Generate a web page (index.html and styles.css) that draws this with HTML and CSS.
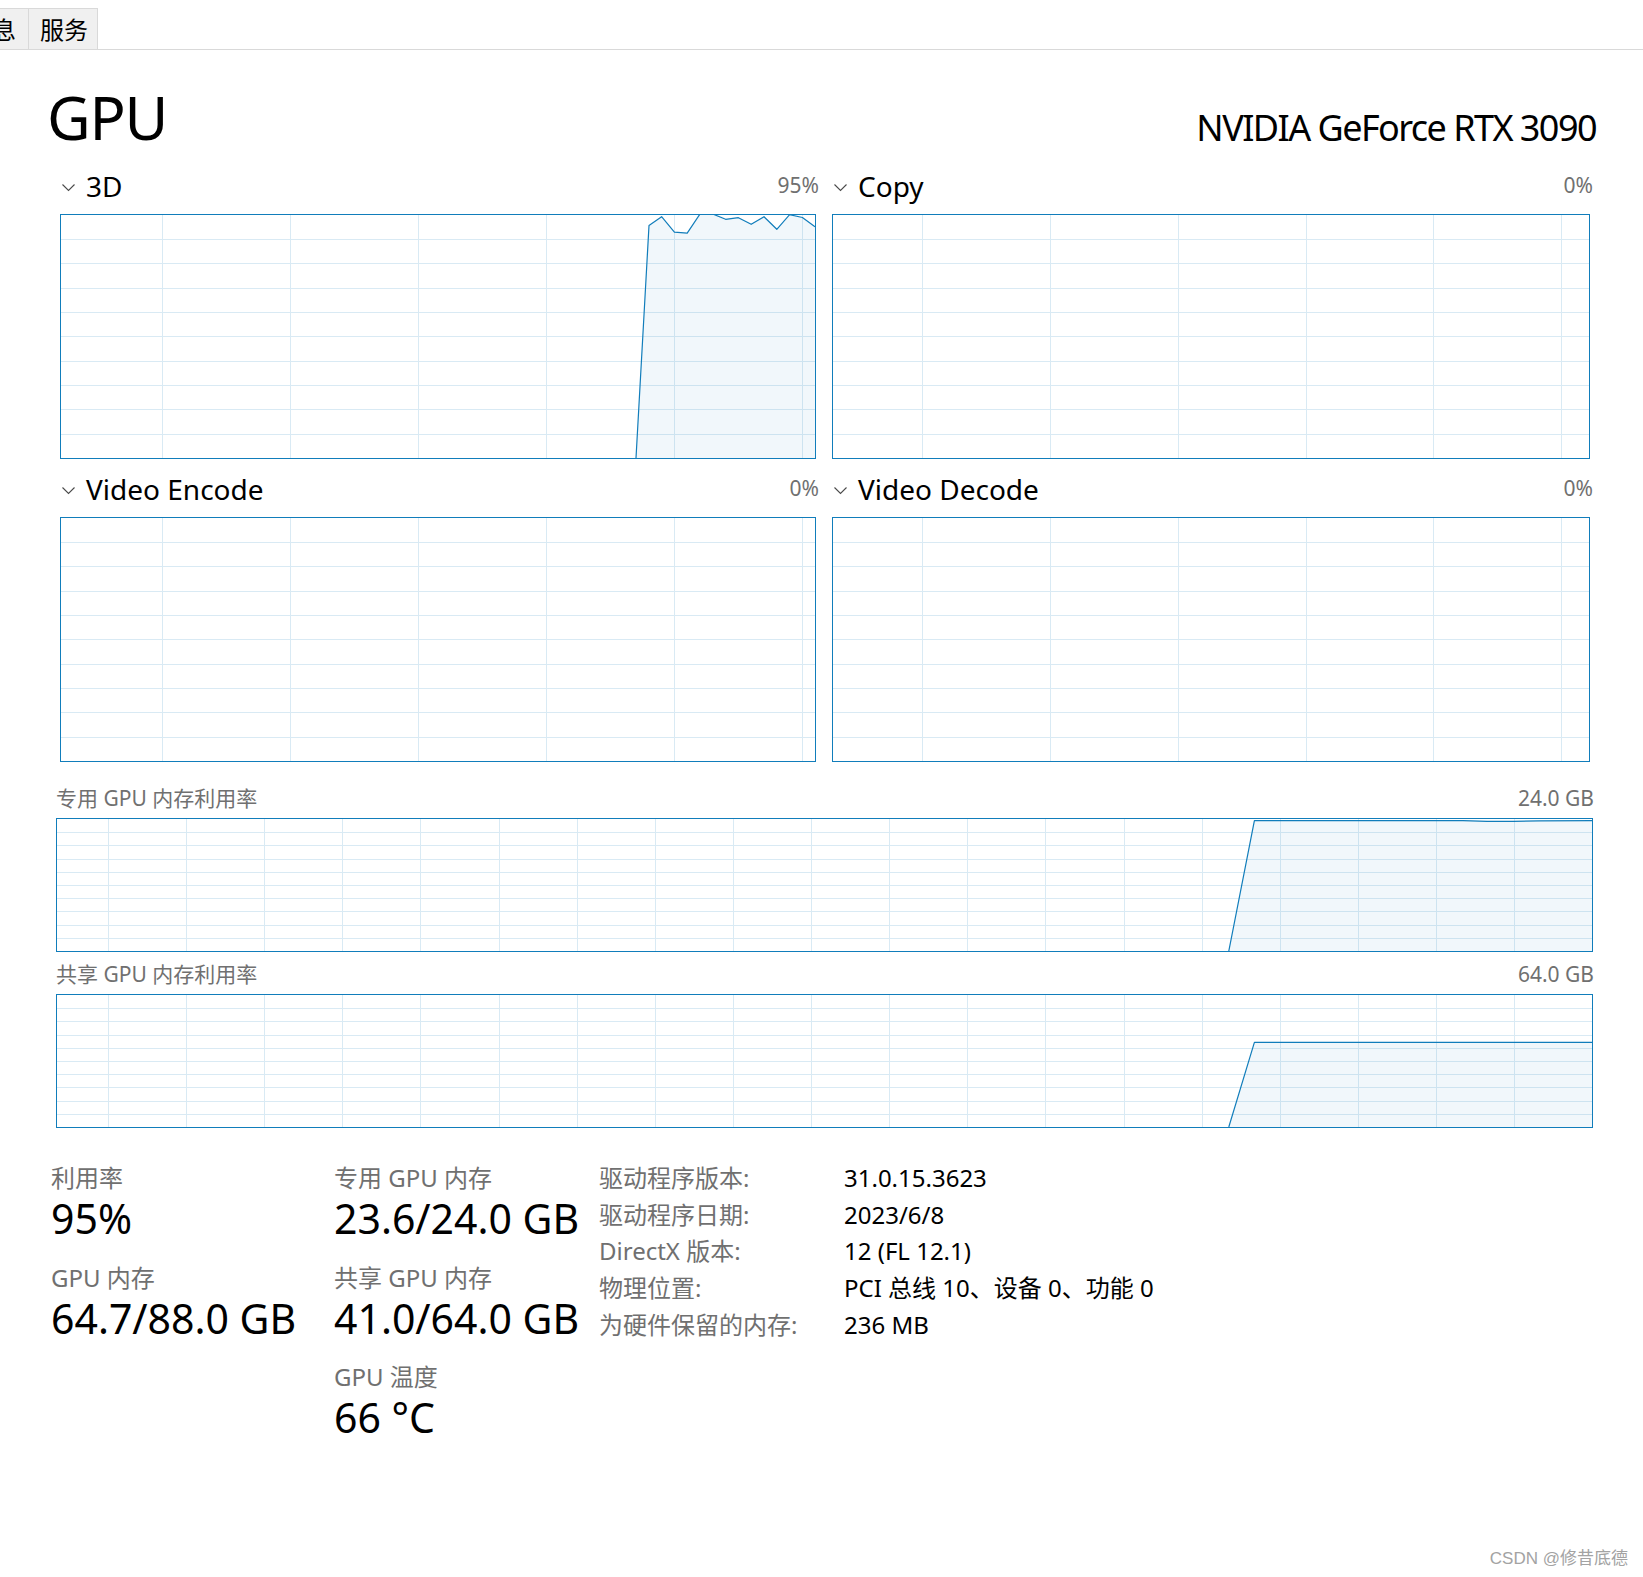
FILE: index.html
```html
<!DOCTYPE html>
<html lang="zh-CN">
<head>
<meta charset="utf-8">
<title>GPU</title>
<link rel="stylesheet" href="styles.css">
</head>
<body>
<nav class="tabs">
  <div class="tab tab-partial"><span>详细信息</span></div>
  <div class="tab">服务</div>
</nav>
<main class="page">
  <header class="head">
    <h1 class="title">GPU</h1>
    <div class="model">NVIDIA GeForce RTX 3090</div>
  </header>

  <section class="engines">
    <div class="engine">
      <div class="engine-head">
        <svg class="chev" width="14" height="8" viewBox="0 0 14 8"><path d="M0.5 0.5L6.5 6.5L12.5 0.5"/></svg>
        <span class="engine-name">3D</span>
        <span class="engine-pct">95%</span>
      </div>
      <div class="graph graph-engine">
        <svg class="plot" width="754" height="243" viewBox="0 0 754 243">
          <path class="grid" d="M0 24.5H754M0 48.5H754M0 73.5H754M0 97.5H754M0 121.5H754M0 146.5H754M0 170.5H754M0 194.5H754M0 219.5H754M101.5 0V243M229.5 0V243M357.5 0V243M485.5 0V243M613.5 0V243M741.5 0V243"/>
          <polygon class="area" points="0,243 575,243 588,10.5 600.6,1.7 613.4,17.2 626.2,18.2 639,-1 651.8,-1 664.6,4.3 677.4,2.7 690.2,9.3 703,1.7 715.8,14.3 728.6,-0.3 741.4,2.5 754,11.7 754,243"/>
          <polyline class="line" points="575,243 588,10.5 600.6,1.7 613.4,17.2 626.2,18.2 639,-1 651.8,-1 664.6,4.3 677.4,2.7 690.2,9.3 703,1.7 715.8,14.3 728.6,-0.3 741.4,2.5 754,11.7"/>
        </svg>
      </div>
    </div>
    <div class="engine">
      <div class="engine-head">
        <svg class="chev" width="14" height="8" viewBox="0 0 14 8"><path d="M0.5 0.5L6.5 6.5L12.5 0.5"/></svg>
        <span class="engine-name">Copy</span>
        <span class="engine-pct">0%</span>
      </div>
      <div class="graph graph-engine">
        <svg class="plot" width="756" height="243" viewBox="0 0 756 243">
          <path class="grid" d="M0 24.5H756M0 48.5H756M0 73.5H756M0 97.5H756M0 121.5H756M0 146.5H756M0 170.5H756M0 194.5H756M0 219.5H756M89.5 0V243M217.5 0V243M345.5 0V243M473.5 0V243M600.5 0V243M728.5 0V243"/>
        </svg>
      </div>
    </div>
    <div class="engine">
      <div class="engine-head">
        <svg class="chev" width="14" height="8" viewBox="0 0 14 8"><path d="M0.5 0.5L6.5 6.5L12.5 0.5"/></svg>
        <span class="engine-name">Video Encode</span>
        <span class="engine-pct">0%</span>
      </div>
      <div class="graph graph-engine">
        <svg class="plot" width="754" height="243" viewBox="0 0 754 243">
          <path class="grid" d="M0 24.5H754M0 48.5H754M0 73.5H754M0 97.5H754M0 121.5H754M0 146.5H754M0 170.5H754M0 194.5H754M0 219.5H754M101.5 0V243M229.5 0V243M357.5 0V243M485.5 0V243M613.5 0V243M741.5 0V243"/>
        </svg>
      </div>
    </div>
    <div class="engine">
      <div class="engine-head">
        <svg class="chev" width="14" height="8" viewBox="0 0 14 8"><path d="M0.5 0.5L6.5 6.5L12.5 0.5"/></svg>
        <span class="engine-name">Video Decode</span>
        <span class="engine-pct">0%</span>
      </div>
      <div class="graph graph-engine">
        <svg class="plot" width="756" height="243" viewBox="0 0 756 243">
          <path class="grid" d="M0 24.5H756M0 48.5H756M0 73.5H756M0 97.5H756M0 121.5H756M0 146.5H756M0 170.5H756M0 194.5H756M0 219.5H756M89.5 0V243M217.5 0V243M345.5 0V243M473.5 0V243M600.5 0V243M728.5 0V243"/>
        </svg>
      </div>
    </div>
  </section>

  <section class="mem">
    <div class="mem-head"><span>专用 GPU 内存利用率</span><span>24.0 GB</span></div>
    <div class="graph graph-mem">
      <svg class="plot" width="1535" height="132" viewBox="0 0 1535 132">
        <path class="grid" d="M0 13.5H1535M0 26.5H1535M0 40.5H1535M0 53.5H1535M0 66.5H1535M0 79.5H1535M0 92.5H1535M0 106.5H1535M0 119.5H1535M51.5 0V132M129.5 0V132M207.5 0V132M285.5 0V132M363.5 0V132M442.5 0V132M520.5 0V132M598.5 0V132M676.5 0V132M754.5 0V132M832.5 0V132M910.5 0V132M988.5 0V132M1067.5 0V132M1145.5 0V132M1223.5 0V132M1301.5 0V132M1379.5 0V132M1457.5 0V132"/>
        <polygon class="area" points="0,132 1171.8,132 1197.4,1.7 1406,1.7 1430,2.4 1456,2.3 1482,1.8 1535,1.7 1535,132"/>
        <polyline class="line" points="1171.8,132 1197.4,1.7 1406,1.7 1430,2.4 1456,2.3 1482,1.8 1535,1.7"/>
      </svg>
    </div>
    <div class="mem-head"><span>共享 GPU 内存利用率</span><span>64.0 GB</span></div>
    <div class="graph graph-mem">
      <svg class="plot" width="1535" height="132" viewBox="0 0 1535 132">
        <path class="grid" d="M0 13.5H1535M0 26.5H1535M0 40.5H1535M0 53.5H1535M0 66.5H1535M0 79.5H1535M0 92.5H1535M0 106.5H1535M0 119.5H1535M51.5 0V132M129.5 0V132M207.5 0V132M285.5 0V132M363.5 0V132M442.5 0V132M520.5 0V132M598.5 0V132M676.5 0V132M754.5 0V132M832.5 0V132M910.5 0V132M988.5 0V132M1067.5 0V132M1145.5 0V132M1223.5 0V132M1301.5 0V132M1379.5 0V132M1457.5 0V132"/>
        <polygon class="area" points="0,132 1171.8,132 1197.4,47.3 1535,47.3 1535,132"/>
        <polyline class="line" points="1171.8,132 1197.4,47.3 1535,47.3"/>
      </svg>
    </div>
  </section>

  <section class="stats">
    <div class="stat-col stat-col-1">
      <div class="stat"><div class="stat-label">利用率</div><div class="stat-value">95%</div></div>
      <div class="stat"><div class="stat-label">GPU 内存</div><div class="stat-value">64.7/88.0 GB</div></div>
    </div>
    <div class="stat-col stat-col-2">
      <div class="stat"><div class="stat-label">专用 GPU 内存</div><div class="stat-value">23.6/24.0 GB</div></div>
      <div class="stat"><div class="stat-label">共享 GPU 内存</div><div class="stat-value">41.0/64.0 GB</div></div>
      <div class="stat"><div class="stat-label">GPU 温度</div><div class="stat-value">66 °C</div></div>
    </div>
    <dl class="info">
      <dt>驱动程序版本:</dt><dd>31.0.15.3623</dd>
      <dt>驱动程序日期:</dt><dd>2023/6/8</dd>
      <dt>DirectX 版本:</dt><dd>12 (FL 12.1)</dd>
      <dt>物理位置:</dt><dd>PCI 总线 10、设备 0、功能 0</dd>
      <dt>为硬件保留的内存:</dt><dd>236 MB</dd>
    </dl>
  </section>
</main>
<div class="watermark">CSDN @修昔底德</div>
</body>
</html>
```
FILE: styles.css
```css
* { box-sizing: border-box; }

html, body {
  margin: 0;
  padding: 0;
  background: #ffffff;
}

body {
  position: relative;
  width: 1643px;
  min-height: 1577px;
  overflow: hidden;
  font-family: "Noto Sans", "Noto Sans CJK SC", sans-serif;
  color: #000000;
}

/* ---------- tabs ---------- */
.tabs {
  display: flex;
  height: 50px;
  padding-top: 8px;
  border-bottom: 1px solid #d9d9d9;
}

.tab {
  height: 41px;
  padding: 2px 9px 0 11px;
  background: #f0f0f0;
  border-top: 1px solid #d9d9d9;
  border-right: 1px solid #d9d9d9;
  font-size: 24px;
  line-height: 38px;
  white-space: nowrap;
}

.tab-partial {
  width: 29px;
  padding: 2px 12px 0 0;
  display: flex;
  justify-content: flex-end;
  overflow: hidden;
}

.tab-partial span { flex: none; }

/* ---------- page ---------- */
.page {
  padding: 0 47px 0 50px;
}

.head {
  display: flex;
  justify-content: space-between;
  align-items: flex-start;
  height: 83px;
  margin-top: 37px;
}

.title {
  margin: 0 0 0 -3px;
  font-size: 60px;
  font-weight: 400;
  line-height: 60px;
  letter-spacing: -1.2px;
}

.model {
  margin-top: 23px;
  font-size: 36px;
  line-height: 36px;
  letter-spacing: -1.55px;
}

/* ---------- engine graphs ---------- */
.engines {
  display: grid;
  grid-template-columns: 756px 758px;
  column-gap: 16px;
  row-gap: 14px;
  margin-left: 10px;
  width: 1530px;
}

.engine-head {
  display: flex;
  align-items: flex-start;
  height: 44px;
}

.chev {
  display: block;
  flex: none;
  margin: 14px 0 0 2px;
}

.chev path {
  fill: none;
  stroke: #4a4a4a;
  stroke-width: 1.1;
}

.engine-name {
  margin-left: 10px;
  font-size: 28px;
  line-height: 32px;
}

.engine-pct {
  margin-left: auto;
  margin-right: -3px;
  font-size: 21px;
  line-height: 30px;
  color: #707070;
}

.graph {
  border: 1px solid #117dbb;
  background: #ffffff;
}

.graph-engine { height: 245px; }
.graph-mem { height: 134px; }

.plot {
  display: block;
  overflow: hidden;
}

.plot .grid {
  fill: none;
  stroke: #d9eaf4;
  stroke-width: 1;
  shape-rendering: crispEdges;
}

.plot .area {
  fill: rgba(17, 125, 187, 0.06);
  stroke: none;
}

.plot .line {
  fill: none;
  stroke: #117dbb;
  stroke-width: 1.2;
  stroke-linejoin: round;
}

/* ---------- memory graphs ---------- */
.mem {
  width: 1537px;
  margin: 14px 0 0 6px;
}

.mem-head {
  display: flex;
  justify-content: space-between;
  height: 42px;
  padding-top: 2px;
  font-size: 21px;
  line-height: 40px;
  color: #707070;
}

.mem-head span:last-child { margin-right: -1px; }

/* ---------- stats ---------- */
.stats {
  display: flex;
  align-items: flex-start;
  margin: 35px 0 0 1px;
}

.stat-col {
  display: flex;
  flex-direction: column;
  gap: 22.5px;
}

.stat-col-1 { width: 283px; }
.stat-col-2 { width: 265px; }

.stat { height: 77px; }

.stat-label {
  font-size: 24px;
  line-height: 30px;
  color: #707070;
}

.stat-value {
  margin-top: 3px;
  font-size: 41px;
  line-height: 44px;
  white-space: nowrap;
}

.info {
  display: grid;
  grid-template-columns: 245px auto;
  margin: -3px 0 0 0;
  font-size: 24px;
  line-height: 36.7px;
}

.info dt {
  color: #707070;
}

.info dd {
  margin: 0;
  white-space: nowrap;
}

/* ---------- watermark ---------- */
.watermark {
  position: absolute;
  right: 15px;
  top: 1548px;
  font-family: "Liberation Sans", "Noto Sans CJK SC", sans-serif;
  font-size: 17px;
  line-height: 22px;
  color: #a3a3a3;
}
```
